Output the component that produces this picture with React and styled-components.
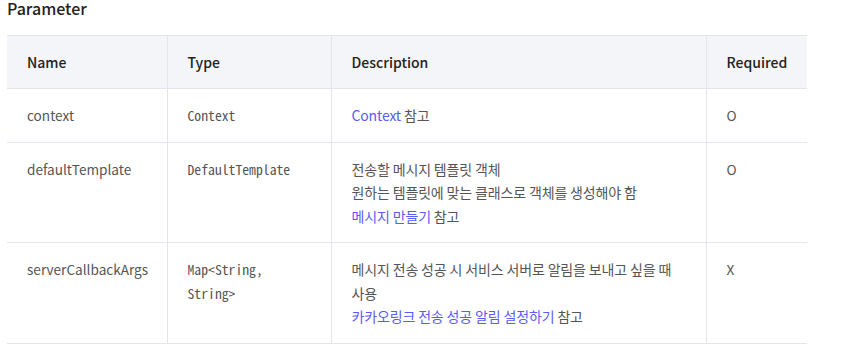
import React from "react";
import styled, { createGlobalStyle } from "styled-components";

const Global = createGlobalStyle`
  html, body { margin: 0; padding: 0; background: #fff; }
  body { font-family: "Noto Sans CJK KR", "Noto Sans", sans-serif; }
`;

const Page = styled.div`
  padding: 0 0 0 7px;
  width: 800px;
`;

const Title = styled.h3`
  margin: 0 0 19px;
  font-size: 16px;
  line-height: 16px;
  font-weight: 500;
  color: #222;
`;

const Table = styled.table`
  width: 800px;
  border-collapse: collapse;
  table-layout: fixed;
`;

const Th = styled.th`
  background: #f4f5f9;
  text-align: left;
  font-weight: 500;
  font-size: 14px;
  color: #222;
  padding: 15px 20px;
  line-height: 22px;
  border-top: 1px solid #e3e4ec;
  border-bottom: 1px solid #e3e4ec;
  & + & { border-left: 1px solid #e3e4ec; }
`;

const Td = styled.td`
  vertical-align: top;
  padding: 15px 20px 14px;
  line-height: 23.5px;
  font-size: 13.6px;
  color: #555;
  border-bottom: 1px solid #e3e4ec;
  & + & { border-left: 1px solid #e3e4ec; }
`;

const Mono = styled.span`
  font-family: "Noto Sans Mono CJK KR", "DejaVu Sans Mono", monospace;
  font-size: 13.7px;
  color: #555;
`;

const Desc = styled.div`
  font-size: 14px;
  letter-spacing: -0.15px;
`;

const Link = styled.span`
  color: #5a5cf5;
`;

const rows = [
  {
    name: "context",
    type: "Context",
    desc: [[<Link key="l">Context</Link>, " 참고"]],
    req: "O",
  },
  {
    name: "defaultTemplate",
    type: "DefaultTemplate",
    desc: [
      ["전송할 메시지 템플릿 객체"],
      ["원하는 템플릿에 맞는 클래스로 객체를 생성해야 함"],
      [<Link key="l">메시지 만들기</Link>, " 참고"],
    ],
    req: "O",
  },
  {
    name: "serverCallbackArgs",
    type: "Map<String, String>",
    desc: [
      ["메시지 전송 성공 시 서비스 서버로 알림을 보내고 싶을 때 사용"],
      [<Link key="l">카카오링크 전송 성공 알림 설정하기</Link>, " 참고"],
    ],
    req: "X",
  },
];

export default function App() {
  return (
    <Page>
      <Global />
      <Title>Parameter</Title>
      <Table>
        <colgroup>
          <col style={{ width: 160 }} />
          <col style={{ width: 164 }} />
          <col style={{ width: 375 }} />
          <col style={{ width: 101 }} />
        </colgroup>
        <thead>
          <tr>
            <Th>Name</Th>
            <Th>Type</Th>
            <Th>Description</Th>
            <Th>Required</Th>
          </tr>
        </thead>
        <tbody>
          {rows.map((r) => (
            <tr key={r.name}>
              <Td>{r.name}</Td>
              <Td>
                <Mono>{r.type}</Mono>
              </Td>
              <Td>
                {r.desc.map((l, i) => (
                  <Desc key={i}>{l}</Desc>
                ))}
              </Td>
              <Td>{r.req}</Td>
            </tr>
          ))}
        </tbody>
      </Table>
    </Page>
  );
}
